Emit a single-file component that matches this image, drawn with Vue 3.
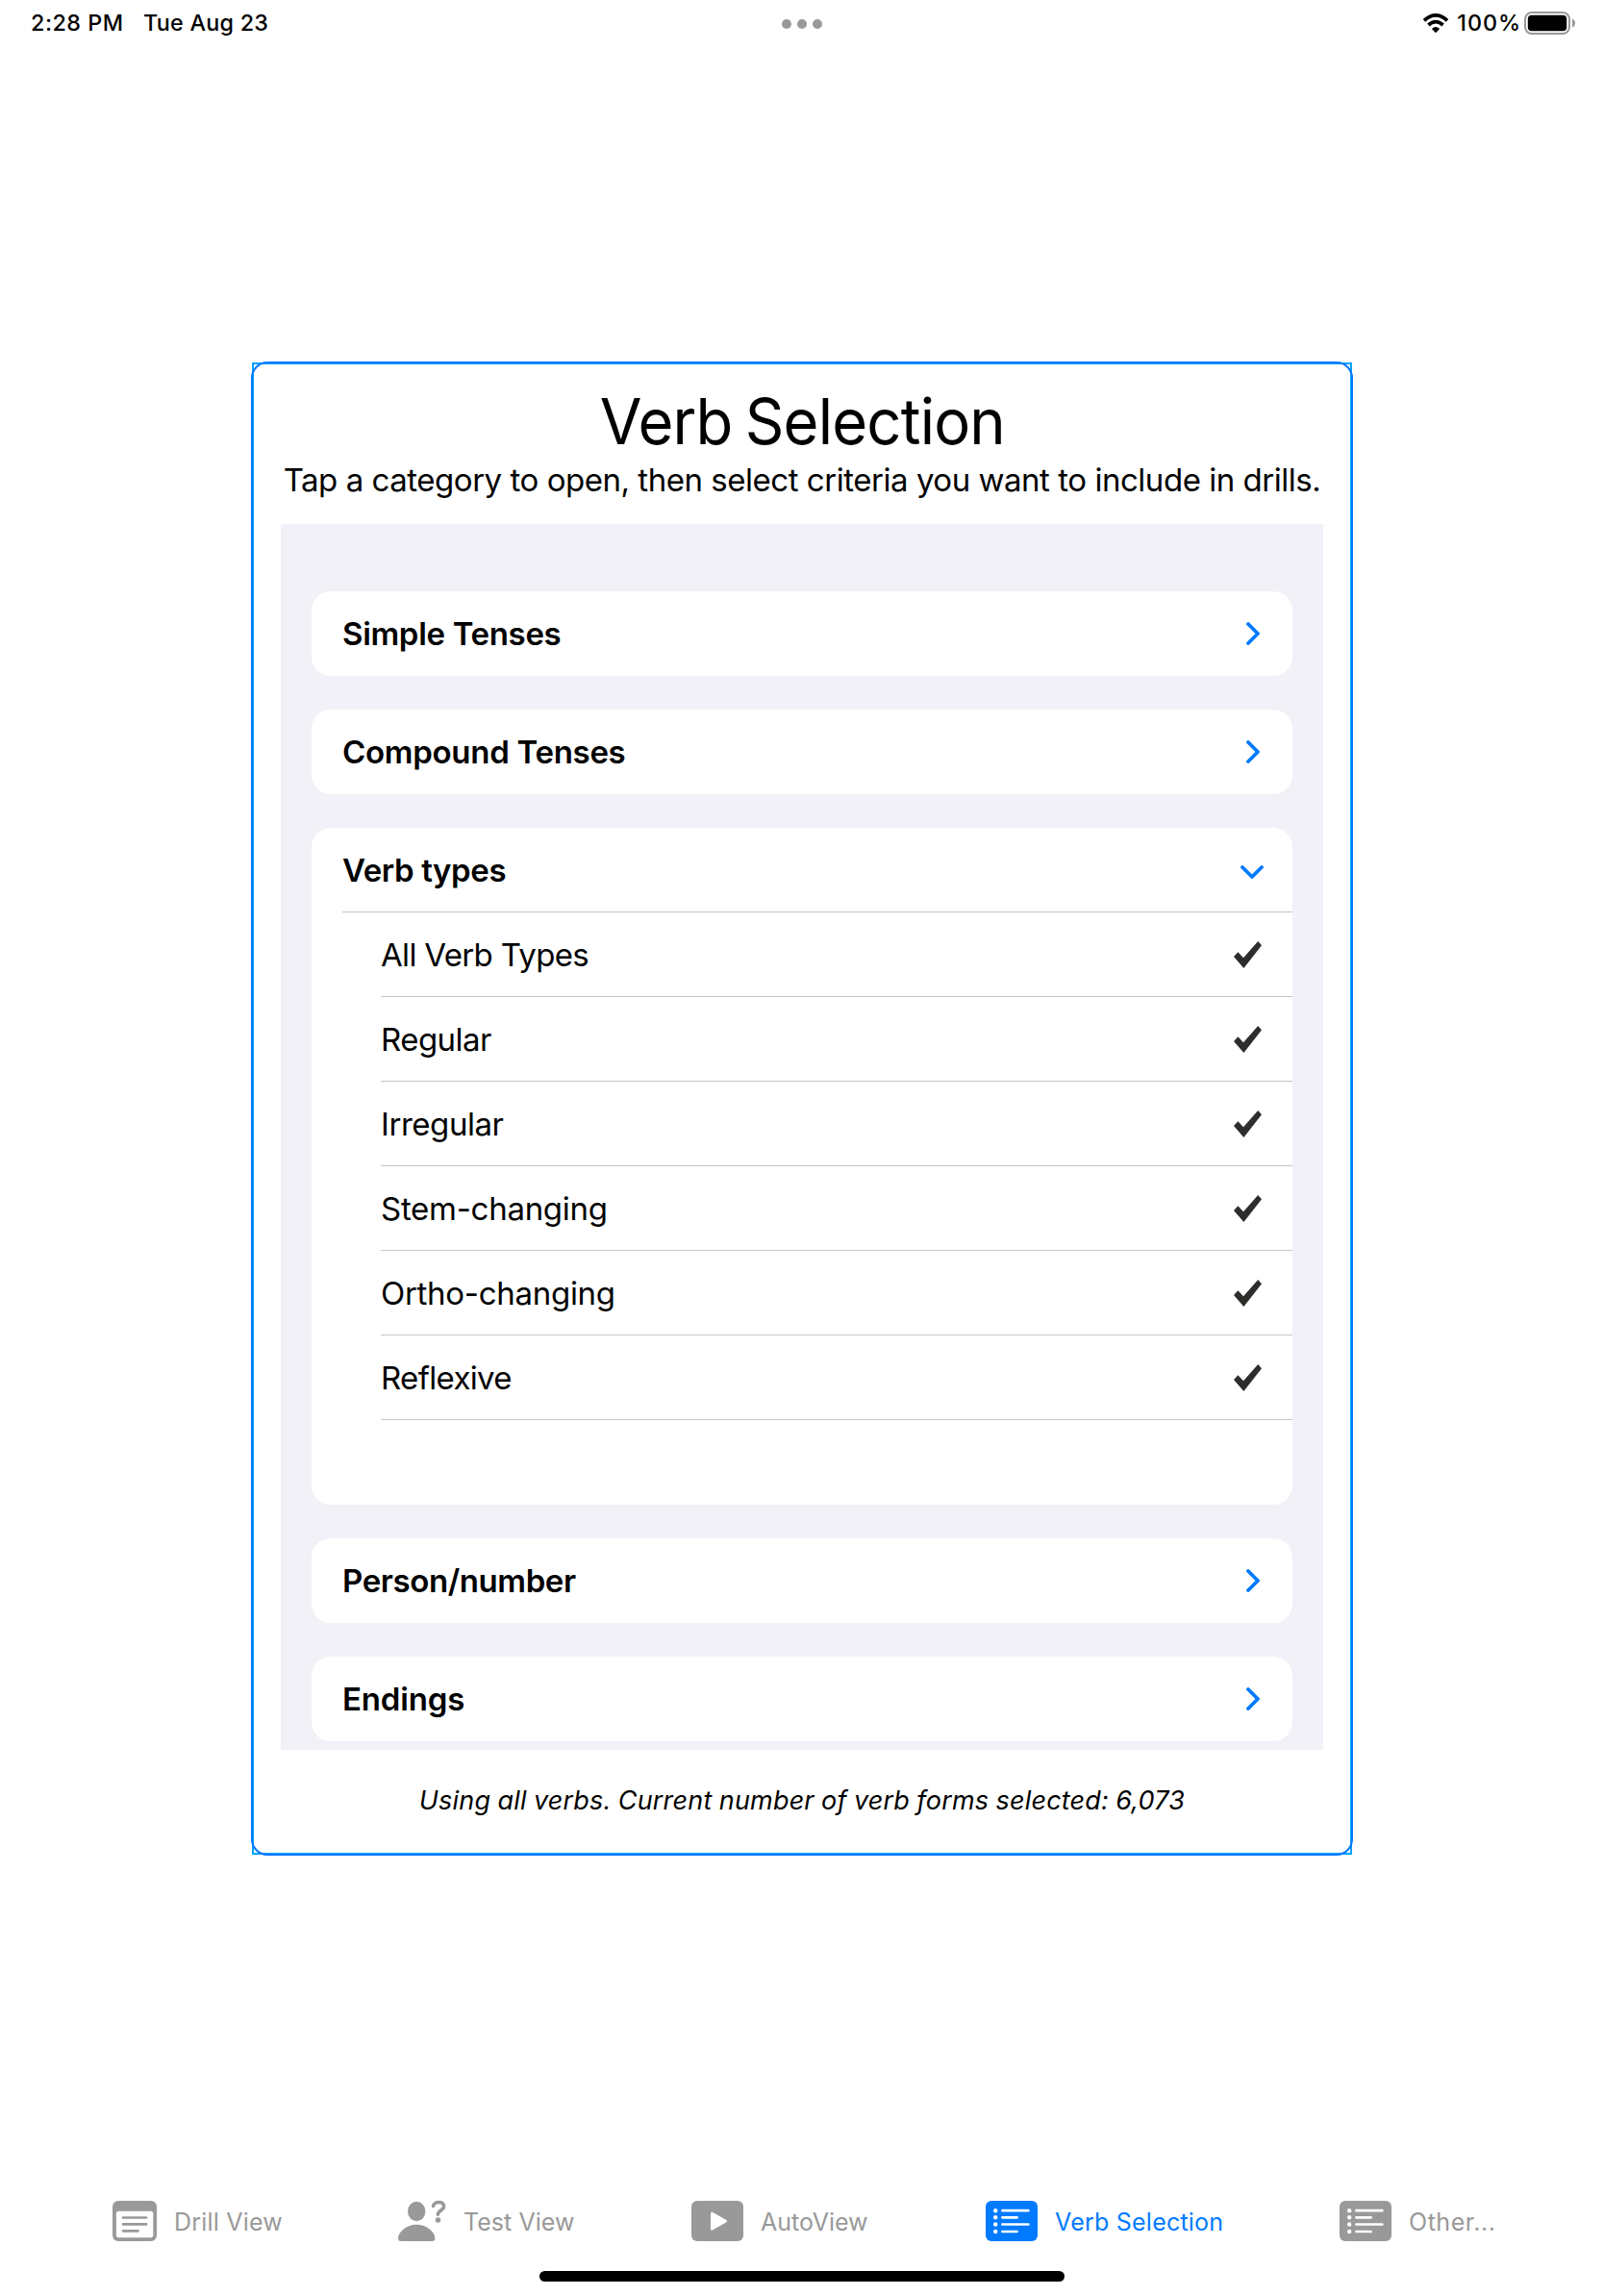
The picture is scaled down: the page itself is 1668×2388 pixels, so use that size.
<script setup>
import { reactive } from 'vue'

const sections = reactive([
  { title: 'Simple Tenses', tracking: -0.32, open: false, items: [] },
  { title: 'Compound Tenses', tracking: -0.29, open: false, items: [] },
  {
    title: 'Verb types',
    tracking: -0.4,
    open: true,
    items: [
      { label: 'All Verb Types', tracking: -0.67 },
      { label: 'Regular', tracking: -0.55 },
      { label: 'Irregular', tracking: -0.45 },
      { label: 'Stem-changing', tracking: -0.28 },
      { label: 'Ortho-changing', tracking: -0.29 },
      { label: 'Reflexive', tracking: -0.66 }
    ]
  },
  { title: 'Person/number', tracking: -0.4, open: false, items: [] },
  { title: 'Endings', tracking: -0.16, open: false, items: [] }
])

const tabs = [
  { label: 'Drill View', icon: 'drill', tracking: 0.2 },
  { label: 'Test View', icon: 'test', tracking: 0.05 },
  { label: 'AutoView', icon: 'play', tracking: 0 },
  { label: 'Verb Selection', icon: 'list', tracking: 0.22, active: true },
  { label: 'Other...', icon: 'list', tracking: 0.54 }
]
</script>

<template>
  <div class="screen">
    <header class="status">
      <div class="status-left">
        <span class="time">2:28 PM</span>
        <span class="date">Tue Aug 23</span>
      </div>
      <svg class="dots" width="42" height="10" viewBox="0 0 42 10">
        <circle cx="5" cy="5" r="5" />
        <circle cx="21" cy="5" r="5" />
        <circle cx="37" cy="5" r="5" />
      </svg>
      <div class="status-right">
        <svg class="wifi" width="28" height="21" viewBox="0 0 28 21">
          <path d="M2 7.4 Q14 -3.6 26 7.4" fill="none" stroke="#000" stroke-width="3.7" />
          <path d="M6.4 12 Q14 5.2 21.6 12" fill="none" stroke="#000" stroke-width="3.7" />
          <path d="M9.9 16 Q14 12.2 18.1 16 L14 20.2 Z" />
        </svg>
        <span class="percent">100%</span>
        <svg class="battery" width="53" height="24" viewBox="0 0 53 24">
          <rect x="1" y="1" width="46" height="22" rx="7" fill="none" stroke="#999" stroke-width="2" />
          <rect x="3.8" y="3.8" width="40.4" height="16.4" rx="4" />
          <path d="M50 7.5 Q53 9 53 12 Q53 15 50 16.5 Z" fill="#999" />
        </svg>
      </div>
    </header>

    <main class="panel">
      <h1 class="title">Verb Selection</h1>
      <p class="hint">Tap a category to open, then select criteria you want to include in drills.</p>
      <div class="list">
        <section v-for="s in sections" :key="s.title" class="card">
          <div class="head" :class="{ open: s.open }">
            <span :style="{ letterSpacing: s.tracking + 'px' }">{{ s.title }}</span>
            <svg v-if="s.open" class="chevron" width="24" height="24" viewBox="0 0 24 24">
              <path d="M2 9 L12 19 L22 9" />
            </svg>
            <svg v-else class="chevron" width="24" height="24" viewBox="0 0 24 24">
              <path d="M8 2 L18 12 L8 22" />
            </svg>
          </div>
          <template v-if="s.open">
            <div v-for="item in s.items" :key="item.label" class="row">
              <span :style="{ letterSpacing: item.tracking + 'px' }">{{ item.label }}</span>
              <svg class="check" width="29" height="28" viewBox="0 0 29 28">
                <path d="M0 16 L4.4 11.2 L10 17.2 L25.2 0 L29 4.3 L10.4 28 Z" />
              </svg>
            </div>
            <div class="spacer"></div>
          </template>
        </section>
      </div>
      <p class="summary">Using all verbs. Current number of verb forms selected: 6,073</p>
    </main>

    <nav class="tabs">
      <div v-for="t in tabs" :key="t.label" class="tab" :class="{ active: t.active }">
        <svg v-if="t.icon === 'drill'" width="46" height="42" viewBox="0 0 46 42">
          <rect width="46" height="42" rx="6" fill="currentColor" />
          <rect x="3.9" y="10.7" width="38.4" height="27.5" rx="2.6" fill="#fff" />
          <path d="M11 17.5 H35 M11 24.3 H35 M11 31.3 H26.4" class="line" />
        </svg>
        <svg v-else-if="t.icon === 'test'" width="50" height="44" viewBox="0 0 50 44">
          <ellipse cx="19.2" cy="12" rx="9.2" ry="10.2" fill="currentColor" />
          <path d="M3 43 Q0 43 0 40 C0 33.6 8.6 25.8 19.2 25.8 C29.8 25.8 38.4 33.6 38.4 40 Q38.4 43 35.4 43 Z" fill="currentColor" />
          <path d="M36.6 6.4 C37.2 1.2 47.6 1 47.6 6.7 C47.6 10.9 41.4 11 41.4 15.2" fill="none" stroke="currentColor" stroke-width="3.6" stroke-linecap="round" />
          <circle cx="41.5" cy="21" r="2.7" fill="currentColor" />
        </svg>
        <svg v-else-if="t.icon === 'play'" width="54" height="42" viewBox="0 0 54 42">
          <rect width="54" height="42" rx="6" fill="currentColor" />
          <path d="M21.2 12.9 L35.8 21.1 L21.2 29.5 Z" fill="#fff" stroke="#fff" stroke-width="2.4" stroke-linejoin="round" />
        </svg>
        <svg v-else width="54" height="42" viewBox="0 0 54 42">
          <rect width="54" height="42" rx="6" fill="currentColor" />
          <g fill="#fff">
            <circle cx="10.2" cy="10.2" r="2.2" />
            <circle cx="10.2" cy="17.3" r="2.2" />
            <circle cx="10.2" cy="24.5" r="2.2" />
            <circle cx="10.2" cy="32" r="2.2" />
          </g>
          <path d="M17.4 10.2 H44.4 M17.4 17.3 H32.6 M17.4 24.5 H44.4 M17.4 32 H32.6" class="line light" />
        </svg>
        <span class="tab-label" :style="{ letterSpacing: t.tracking + 'px' }">{{ t.label }}</span>
      </div>
    </nav>
    <div class="home"></div>
  </div>
</template>

<style scoped>
.screen {
  width: 1668px;
  height: 2388px;
  display: flex;
  flex-direction: column;
  align-items: center;
  overflow: hidden;
  background: #fff;
  color: #000;
  font-family: Inter, "Liberation Sans", sans-serif;
}
svg {
  display: block;
  flex: none;
}
.status {
  width: 100%;
  height: 48px;
  box-sizing: border-box;
  padding: 0 30px 0 32px;
  display: grid;
  grid-template-columns: 1fr 42px 1fr;
  align-items: center;
  font-size: 23.3px;
  font-weight: 500;
  line-height: 48px;
  white-space: nowrap;
}
.status-left,
.status-right {
  display: flex;
  align-items: center;
}
.time {
  width: 117px;
  letter-spacing: 0.52px;
}
.date {
  letter-spacing: 0.27px;
}
.dots {
  margin: 2px 0 0 -1px;
  fill: #999;
}
.status-right {
  justify-content: flex-end;
}
.percent {
  margin: 0 3px 0 8px;
  letter-spacing: 0.95px;
}
.panel {
  width: 1144px;
  height: 1552px;
  margin-top: 329px;
  box-sizing: border-box;
  border: 2px solid #00a2ff;
  position: relative;
  display: flex;
  flex-direction: column;
  align-items: center;
}
/* rounded outline drawn over the square one */
.panel::after {
  content: "";
  position: absolute;
  inset: -3px;
  border: 2px solid #007aff;
  border-radius: 17px;
  pointer-events: none;
}
.title {
  margin: 19px 0 0;
  font-size: 66px;
  font-weight: 400;
  line-height: 80px;
  letter-spacing: -0.85px;
  word-spacing: -4px;
  transform: scaleX(0.96);
}
.hint {
  margin: 0;
  font-size: 33px;
  line-height: 42px;
  letter-spacing: -0.469px;
  white-space: nowrap;
}
.list {
  width: 1084px;
  height: 1275px;
  margin-top: 25px;
  box-sizing: border-box;
  padding: 70px 32px 9px;
  display: flex;
  flex-direction: column;
  gap: 35px;
  background: #f2f1f7;
}
.card {
  background: #fff;
  border-radius: 20px;
  overflow: hidden;
  font-size: 33px;
}
.head,
.row {
  height: 88px;
  box-sizing: border-box;
  display: flex;
  align-items: center;
  justify-content: space-between;
  line-height: 44px;
}
.head {
  margin-left: 32px;
  padding-right: 30px;
  font-weight: 600;
}
.head.open,
.row {
  border-bottom: 1px solid #c6c6c8;
}
.row {
  margin-left: 72px;
  padding-right: 32px;
}
.spacer {
  height: 88px;
}
.chevron path {
  fill: none;
  stroke: #007aff;
  stroke-width: 3.8;
  stroke-linecap: round;
  stroke-linejoin: round;
}
.check {
  fill: #2d2d2b;
}
.summary {
  margin: 33px 0 0;
  font-size: 27px;
  font-style: italic;
  line-height: 40px;
  letter-spacing: 0.19px;
  word-spacing: -0.5px;
  white-space: nowrap;
}
.tabs {
  width: 100%;
  margin-top: 357px;
  height: 48px;
  box-sizing: border-box;
  padding-left: 117px;
  display: grid;
  grid-template-columns: 297px 305px 306px 368px 1fr;
  align-items: center;
}
.tab {
  height: 48px;
  display: flex;
  align-items: center;
  gap: 18px;
  color: #999;
  font-size: 25px;
  line-height: 48px;
  white-space: nowrap;
}
.tab-label {
  padding-top: 2px;
}
.tab.active {
  color: #007aff;
}
.line {
  fill: none;
  stroke: currentColor;
  stroke-width: 2.7;
  stroke-linecap: round;
}
.line.light {
  stroke: #fff;
}
.home {
  margin-top: 28px;
  width: 546px;
  height: 11px;
  border-radius: 6px;
  background: #000;
}
</style>
